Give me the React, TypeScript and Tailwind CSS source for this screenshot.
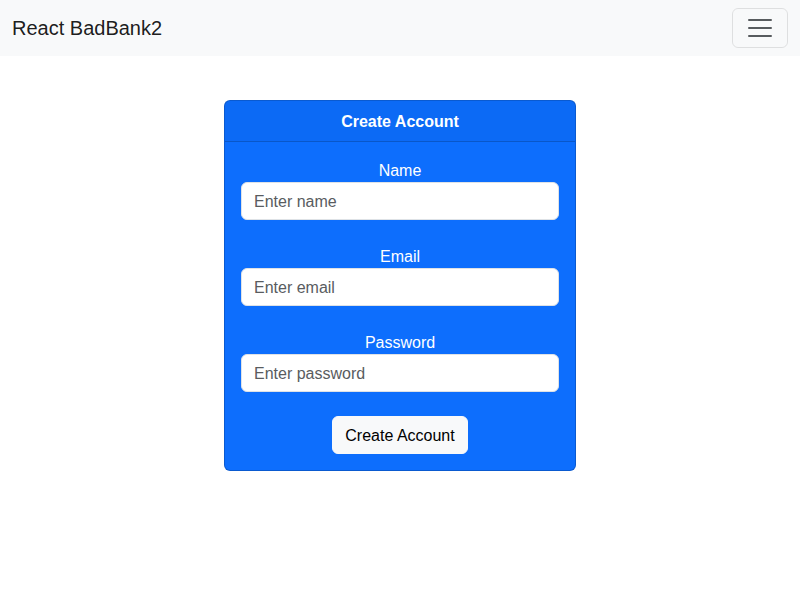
import React from "react";

export default function App() {
  const font = { fontFamily: '"Liberation Sans", Arial, sans-serif' };
  const fields = [
    { label: "Name", ph: "Enter name", type: "text" },
    { label: "Email", ph: "Enter email", type: "email" },
    { label: "Password", ph: "Enter password", type: "password" },
  ];
  return (
    <div className="min-h-[600px] bg-white text-[#212529]" style={font}>
      <nav className="flex h-[56px] items-center justify-between bg-[#f8f9fa] px-[12px]">
        <span className="text-[20px] leading-[30px] text-black/90">React BadBank2</span>
        <button className="flex h-[40px] w-[56px] items-center justify-center rounded-[6px] border border-black/10">
          <svg width="30" height="30" viewBox="0 0 30 30">
            <path
              d="M4 7h22M4 15h22M4 23h22"
              stroke="rgba(33,37,41,0.75)"
              strokeWidth="2"
              strokeLinecap="round"
            />
          </svg>
        </button>
      </nav>
      <div className="flex justify-center pt-[44px]">
        <div className="w-[352px] rounded-[6px] border border-black/[0.175] bg-[#0d6efd] text-white">
          <div className="border-b border-black/[0.175] bg-black/[0.03] px-[16px] pt-[9px] pb-[7px] text-center text-[16px] font-bold leading-[24px]">
            Create Account
          </div>
          <div className="flex flex-col items-center p-[16px] text-[16px] leading-[24px]">
            {fields.map((f, i) => (
              <div key={f.label} className={`w-full text-center ${i > 0 ? "mt-[24px]" : ""}`}>
                <div className="pt-[1px] h-[24px]">{f.label}</div>
                <input
                  type={f.type}
                  placeholder={f.ph}
                  className="block h-[38px] w-full rounded-[6px] border border-[#dee2e6] bg-white px-[12px] pt-[7px] pb-[5px] text-[16px] text-[#212529] outline-none placeholder:text-[#595c5f]"
                  style={font}
                />
              </div>
            ))}
            <button
              className="mt-[24px] h-[38px] rounded-[6px] border border-[#f8f9fa] bg-[#f8f9fa] px-[12px] pt-[1px] text-[16px] leading-[24px] text-black"
              style={font}
            >
              Create Account
            </button>
          </div>
        </div>
      </div>
    </div>
  );
}
